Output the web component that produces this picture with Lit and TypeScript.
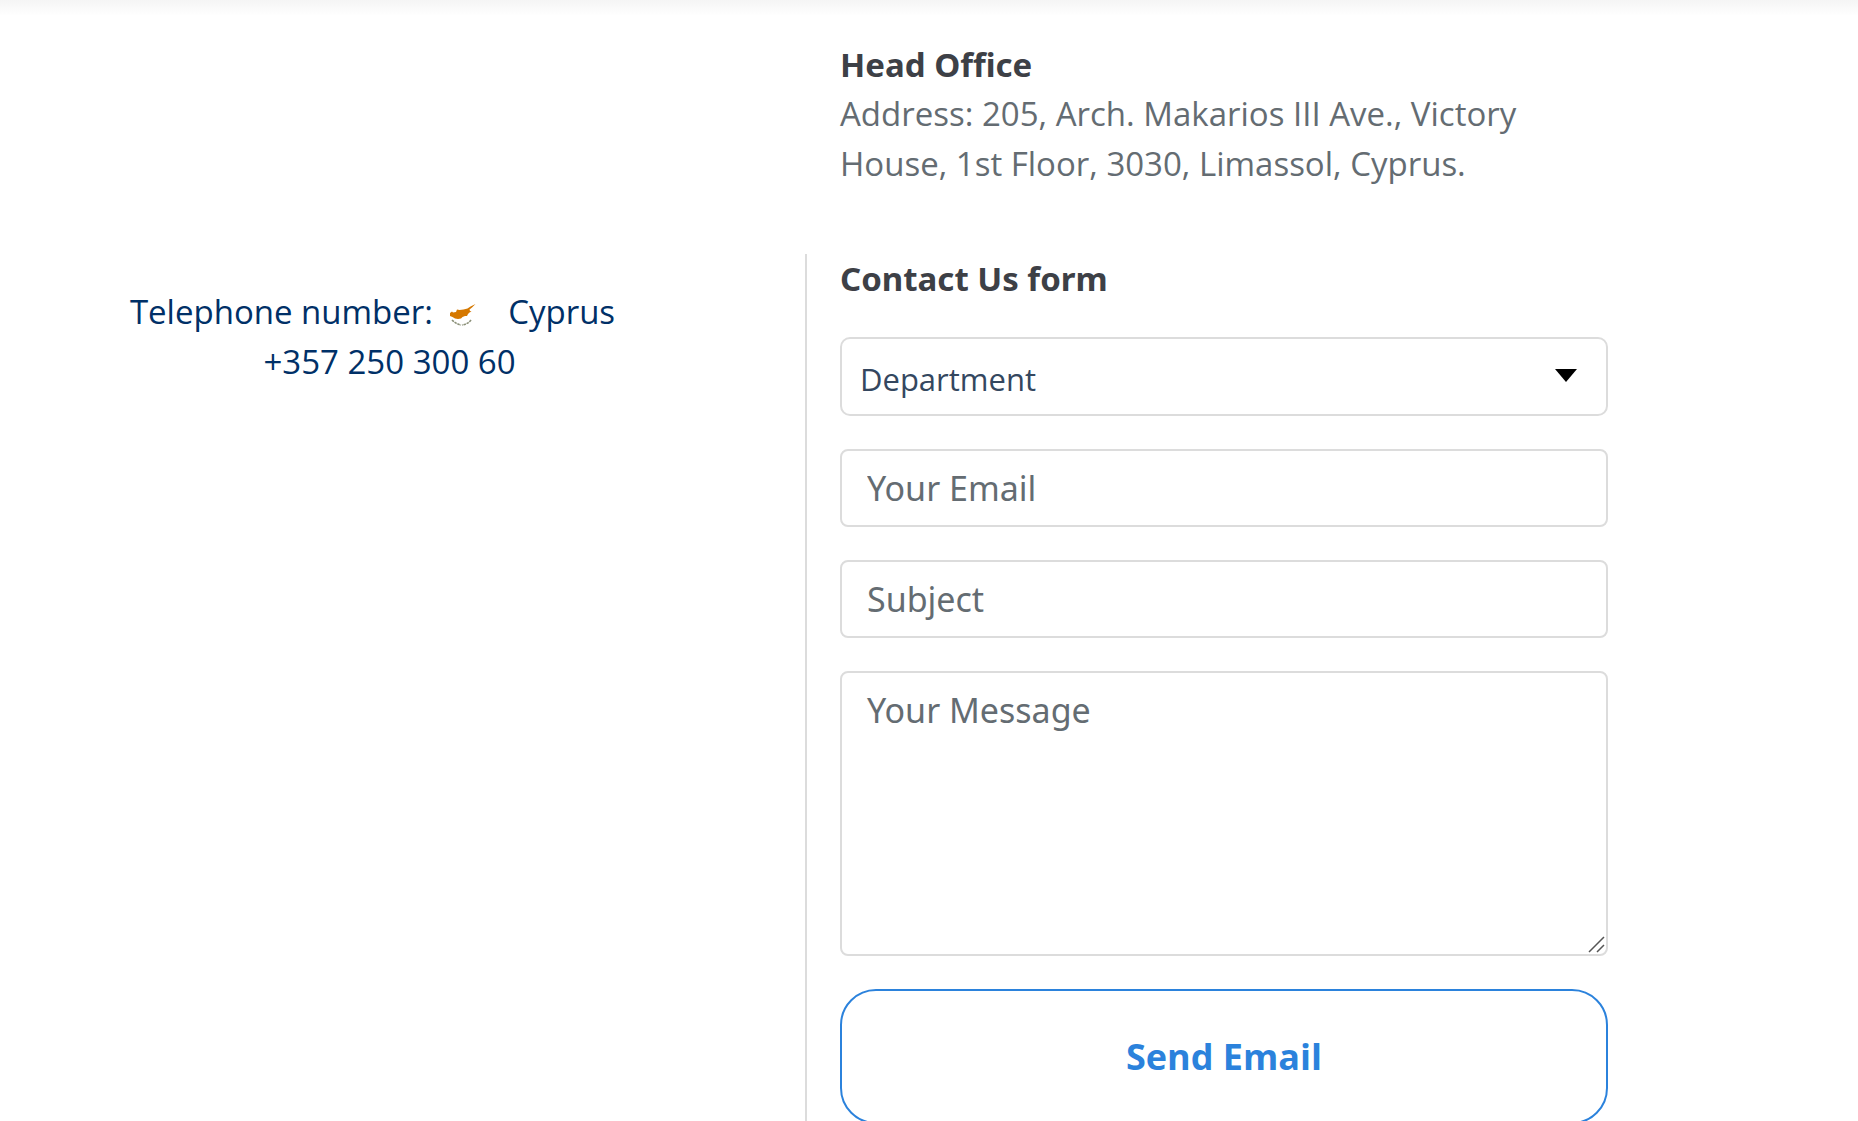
import { LitElement, html, css } from "lit";
import { customElement } from "lit/decorators.js";

@customElement("app-root")
export class AppRoot extends LitElement {
  static styles = css`
    :host {
      display: block;
      height: 100vh;
      overflow: hidden;
      background: linear-gradient(#f5f5f5, #ffffff 16px);
      color: #646c72;
      font-family: "Open Sans", sans-serif;
      font-size: 33px;
      line-height: 50px;
    }
    * {
      box-sizing: border-box;
    }
    .page {
      display: grid;
      grid-template-columns: 805fr 838fr 215fr;
      row-gap: 65px;
      padding-top: 40px;
    }
    .office,
    .contact {
      grid-column: 2;
      padding-inline: 35px;
    }
    .phone {
      grid-column: 1;
      padding: 33px 60px 0 0;
      text-align: center;
    }
    .phone a {
      color: #003067;
      text-decoration: none;
    }
    .number {
      padding-left: 34px;
    }
    .line {
      display: block;
    }
    .flag {
      width: 32px;
      height: 24px;
      margin-inline: 4px 22px;
      vertical-align: -3px;
    }
    h2 {
      margin: 0;
      color: #3d4046;
      font-family: "Noto Sans", sans-serif;
      font-size: 33px;
      line-height: 49px;
    }
    p {
      margin: 0;
    }
    .contact {
      border-left: 2px solid #dcdcdc;
      padding-left: 33px;
    }
    form {
      display: flex;
      flex-direction: column;
      gap: 33px;
      padding-top: 34px;
    }
    .field {
      position: relative;
      display: flex;
    }
    select,
    input,
    textarea,
    button {
      display: block;
      width: 100%;
      margin: 0;
      border: 2px solid #dcdcdc;
      border-radius: 8px;
      background: transparent;
      font-family: "Open Sans", sans-serif;
      outline-offset: 2px;
    }
    select {
      appearance: none;
      height: 79px;
      padding: 4px 18px 0;
      border-radius: 10px;
      color: #34475f;
      font-size: 31px;
    }
    input,
    textarea {
      padding: 0 25px;
      color: #34475f;
      font-family: "Noto Sans", sans-serif;
      font-size: 34px;
    }
    input {
      height: 78px;
    }
    textarea {
      height: 285px;
      padding-block: 12px;
      line-height: 50px;
      resize: none;
    }
    ::placeholder {
      color: #646c72;
      opacity: 1;
    }
    .arrow,
    .grip {
      position: absolute;
      pointer-events: none;
    }
    .arrow {
      top: 32px;
      right: 31px;
      width: 22px;
      height: 14px;
    }
    .grip {
      right: 3px;
      bottom: 3px;
      width: 17px;
      height: 17px;
    }
    button {
      height: 135px;
      border-color: #2b82dc;
      border-radius: 36px;
      color: #2b82dc;
      font-size: 36px;
      font-weight: 700;
      cursor: pointer;
    }
  `;

  render() {
    return html`
      <main class="page">
        <section class="office">
          <h2>Head Office</h2>
          <p>Address: 205, Arch. Makarios III Ave., Victory House, 1st Floor, 3030, Limassol, Cyprus.</p>
        </section>
        <section class="phone">
          <a href="tel:+35725030060">
            <span class="line"
              >Telephone number:
              <svg class="flag" viewBox="0 0 32 24" role="img" aria-label="Flag of Cyprus">
                <path
                  fill="#d57800"
                  d="M4 10l2 -1.5 1 1 3 -.5 1 -2.5 2.5 .5 4 -.5 4 -1 3 -2 5 -2.5 -3.5 3.5 -2.5 2 .5 1.5 1.5 .5 -2 1 -1.5 1.5 -1 2 -2 0 -2.5 1 -1.5 1.5 -3 .5 -3 -.5 -2.5 -1.5 -2.5 -1z"
                />
                <path fill="none" stroke="#8b9078" stroke-width="1.6" stroke-dasharray="2.5 .8" d="M6 17q4 4 9 5" />
                <path fill="none" stroke="#8b9078" stroke-width="1.6" stroke-dasharray="2.5 .8" d="M25 17q-3 4 -9 5" />
              </svg>
              Cyprus</span
            >
            <span class="line number">+357 250 300 60</span>
          </a>
        </section>
        <section class="contact">
          <h2>Contact Us form</h2>
          <form @submit=${(e: Event) => e.preventDefault()}>
            <div class="field">
              <select aria-label="Department">
                <option>Department</option>
              </select>
              <svg class="arrow" viewBox="0 0 22 14" aria-hidden="true"><path d="M0 0h22L11 13z" /></svg>
            </div>
            <input type="email" aria-label="Your Email" placeholder="Your Email" />
            <input type="text" aria-label="Subject" placeholder="Subject" />
            <div class="field">
              <textarea aria-label="Your Message" placeholder="Your Message"></textarea>
              <svg class="grip" viewBox="0 0 17 17" aria-hidden="true">
                <path fill="none" stroke="#555" stroke-width="1.5" d="M1 16L16 1M9 16l7 -7" />
              </svg>
            </div>
            <button type="submit">Send Email</button>
          </form>
        </section>
      </main>
    `;
  }
}
